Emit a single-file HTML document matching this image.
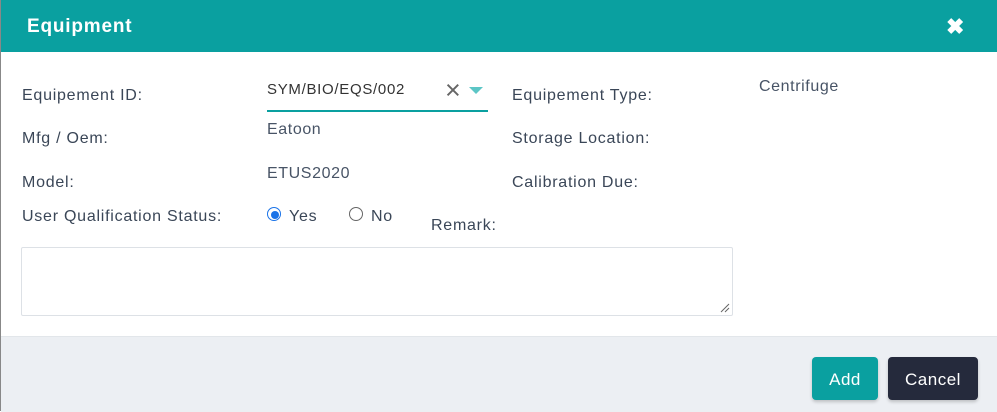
<!DOCTYPE html><html><head><style>
body{margin:0;width:997px;height:411px;overflow:hidden;background:#fff;font-family:"Liberation Sans",sans-serif;position:relative}
.a{position:absolute;white-space:nowrap}
.l{color:#3a4657;font-size:16px;letter-spacing:0.75px}
.v{color:#485466;font-size:16px;letter-spacing:0.6px}
</style></head><body>
<div class="a" style="left:0;top:0;width:1px;height:411px;background:#888"></div>
<div class="a" style="left:1px;top:0;width:996px;height:52px;background:#0aa0a0"></div>
<div class="a" style="left:27px;top:16px;color:#fff;font-weight:bold;font-size:19px;letter-spacing:0.8px">Equipment</div>
<div class="a" style="left:946px;top:14px;color:#fff;font-weight:bold;font-size:22px">✖</div>
<div class="a l" style="left:22px;top:87px">Equipement ID:</div>
<div class="a v" style="left:267px;top:81px;color:#333;font-size:15px;letter-spacing:0.7px">SYM/BIO/EQS/002</div>
<div class="a" style="left:445px;top:75px;color:#666;font-size:27px;font-weight:300">×</div>
<div class="a" style="left:469px;top:87px;width:0;height:0;border-left:7px solid transparent;border-right:7px solid transparent;border-top:7px solid #5cc6c6"></div>
<div class="a" style="left:267px;top:110px;width:221px;height:2px;background:#0aa0a0"></div>
<div class="a l" style="left:512px;top:87px">Equipement Type:</div>
<div class="a v" style="left:759px;top:78px">Centrifuge</div>
<div class="a l" style="left:22px;top:130px">Mfg / Oem:</div>
<div class="a v" style="left:267px;top:121px">Eatoon</div>
<div class="a l" style="left:512px;top:130px">Storage Location:</div>
<div class="a l" style="left:22px;top:174px">Model:</div>
<div class="a v" style="left:267px;top:165px">ETUS2020</div>
<div class="a l" style="left:512px;top:174px">Calibration Due:</div>
<div class="a l" style="left:22px;top:208px">User Qualification Status:</div>
<div class="a" style="left:267px;top:207px;width:12px;height:12px;border:1.5px solid #1a73e8;border-radius:50%"></div>
<div class="a" style="left:270.5px;top:210.5px;width:8px;height:8px;background:#1a73e8;border-radius:50%"></div>
<div class="a l" style="left:289px;top:208px">Yes</div>
<div class="a" style="left:349px;top:207px;width:12px;height:12px;border:1.5px solid #666;border-radius:50%"></div>
<div class="a l" style="left:371px;top:208px">No</div>
<div class="a l" style="left:431px;top:217px">Remark:</div>
<div class="a" style="left:21px;top:247px;width:710px;height:67px;border:1px solid #dde1e6;border-radius:2px"></div>
<svg class="a" style="left:719px;top:302px" width="12" height="12"><path d="M2 10L10 2M6 10L10 6" stroke="#666" stroke-width="1"/></svg>
<div class="a" style="left:1px;top:336px;width:996px;height:75px;background:#eceff3;border-top:1px solid #e2e6ea"></div>
<div class="a" style="left:812px;top:357px;width:66px;height:43px;background:#0aa0a0;border-radius:4px;color:#fff;font-size:17px;text-align:center;line-height:46px;letter-spacing:0.5px;box-shadow:0 2px 3px rgba(0,0,0,.2)">Add</div>
<div class="a" style="left:888px;top:357px;width:90px;height:43px;background:#252a3c;border-radius:4px;color:#fff;font-size:17px;text-align:center;line-height:46px;letter-spacing:0.5px;box-shadow:0 2px 3px rgba(0,0,0,.2)">Cancel</div>
</body></html>
